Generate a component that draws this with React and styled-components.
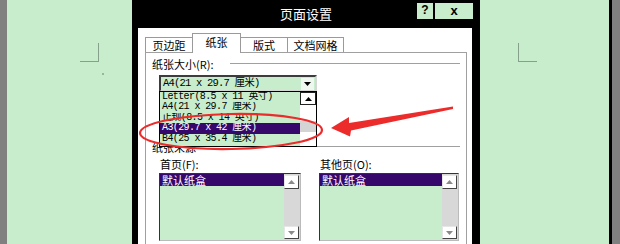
import React from "react";
import styled, { createGlobalStyle } from "styled-components";

const GREEN = "#c7edcc";
const SEL = "#36086c";
const CJK = `"Noto Sans CJK SC", "Liberation Sans", sans-serif`;
const MONO = `"Liberation Mono", "Noto Sans CJK SC", monospace`;

const Global = createGlobalStyle`
  html, body { margin: 0; padding: 0; background: #808080; }
  body { font-family: ${CJK}; }
  * { box-sizing: border-box; }
`;

const Screen = styled.div`
  position: relative;
  display: flex;
  width: 620px;
  height: 244px;
  overflow: hidden;
  background: #808080;
`;

const Gutter = styled.div`
  flex: 0 0 ${(p) => p.$w}px;
  background: ${(p) => p.$bg};
`;

const Page = styled.div`
  flex: 0 0 ${(p) => p.$w}px;
  background: ${GREEN};
  padding: 43px 0 0 ${(p) => p.$padLeft}px;
`;

const CornerMark = styled.div`
  width: 19px;
  height: 19px;
  border-bottom: 1px solid #86a08b;
  ${(p) =>
    p.$side === "left"
      ? "border-right: 1px solid #86a08b;"
      : "border-left: 1px solid #86a08b;"}
`;

const Speck = styled.div`
  width: 2px;
  height: 2px;
  margin: 11px 0 0 22px;
  background: #9cb3a0;
`;

const Dialog = styled.div`
  flex: 0 0 348px;
  display: flex;
  flex-direction: column;
  background: #000;
`;

const TitleBar = styled.div`
  flex: 0 0 28px;
  display: grid;
  grid-template-columns: 1fr auto 1fr;
  align-items: start;
`;

const Title = styled.div`
  grid-column: 2;
  color: #fff;
  font-size: 13px;
  line-height: 27px;
  font-family: ${CJK};
`;

const Caption = styled.div`
  grid-column: 3;
  justify-self: end;
  display: flex;
  gap: 2px;
  padding: 3px 7px 0 0;
`;

const CapBtn = styled.div`
  width: ${(p) => p.$w}px;
  height: 16px;
  background: ${GREEN};
  color: #000;
  font-family: "Liberation Sans", sans-serif;
  font-weight: 700;
  font-size: ${(p) => p.$fs}px;
  line-height: 15px;
  text-align: center;
`;

const Body = styled.div`
  flex: 1;
  display: flex;
  flex-direction: column;
  margin: 0 8px 0 6px;
  padding: 5px 5px 0 7px;
  background: #fff;
`;

const TabStrip = styled.div`
  position: relative;
  z-index: 1;
  display: flex;
  align-items: flex-end;
  height: 19px;
`;

const Tab = styled.div`
  width: ${(p) => p.$w}px;
  height: ${(p) => (p.$active ? 20 : 15)}px;
  margin-right: -1px;
  margin-bottom: ${(p) => (p.$active ? -1 : 0)}px;
  border: 1px solid #9a9a9a;
  border-bottom: none;
  background: #fff;
  font-size: 11px;
  line-height: ${(p) => (p.$active ? 17 : 14)}px;
  text-align: center;
  color: #000;
`;

const Panel = styled.div`
  flex: 1;
  display: flex;
  flex-direction: column;
  border: 1px solid #a0a0a0;
  border-bottom: none;
`;

const SectionRow = styled.div`
  display: flex;
  align-items: center;
  gap: 17px;
  height: 14px;
  margin-top: ${(p) => p.$mt}px;
  padding: 0 6px;
`;

const SectionLabel = styled.div`
  font-size: 11px;
  line-height: 14px;
  color: #000;
  white-space: nowrap;
`;

const Rule = styled.div`
  flex: 1;
  border-top: 1px solid #a0a0a0;
  border-bottom: 1px solid #fff;
`;

const Combo = styled.div`
  position: relative;
  z-index: 2;
  display: flex;
  align-items: center;
  width: 158px;
  height: 17px;
  margin: 4px 0 0 13px;
  border: 2px solid;
  border-color: #3c3c3c #d6d6d6 #d6d6d6 #3c3c3c;
  background: ${GREEN};
`;

const ComboText = styled.div`
  flex: 1;
  padding-left: 2px;
  font-family: ${MONO};
  font-size: 10.5px;
  letter-spacing: -0.8px;
  line-height: 13px;
  white-space: nowrap;
  color: #000;
`;

const DropBtn = styled.div`
  display: flex;
  align-items: center;
  justify-content: center;
  width: 13px;
  height: 12px;
  margin-right: 1px;
  background: #eef8ef;
`;

const DropList = styled.div`
  position: absolute;
  top: calc(100% + 1px);
  left: -2px;
  width: 158px;
  height: 56px;
  display: flex;
  border: 1px solid #000;
  background: ${GREEN};
`;

const Options = styled.div`
  flex: 1;
  overflow: hidden;
`;

const Option = styled.div`
  height: 10.4px;
  padding-left: 2px;
  font-family: ${MONO};
  font-size: 10px;
  letter-spacing: -0.6px;
  line-height: 10.4px;
  white-space: nowrap;
  overflow: hidden;
  color: ${(p) => (p.$sel ? "#fff" : "#000")};
  background: ${(p) => (p.$sel ? SEL : "transparent")};
`;

const DropScroll = styled.div`
  flex: 0 0 16px;
  display: flex;
  flex-direction: column;
  background: #fff;
`;

const ScrollBtn = styled.div`
  display: flex;
  align-items: center;
  justify-content: center;
  flex: 0 0 ${(p) => p.$h}px;
  background: #fff;
  border: 1px solid;
  border-color: ${(p) => (p.$strong ? "#222" : "#e6e6e6 #444 #444 #e6e6e6")};
`;

const Thumb = styled.div`
  height: 11px;
  margin-top: 16px;
  background: #d4d4d4;
`;

const SourceGrid = styled.div`
  display: grid;
  grid-template-columns: 142px 140px;
  column-gap: 18px;
  margin: 3px 0 0 13px;
`;

const SourceCol = styled.div`
  display: flex;
  flex-direction: column;
`;

const FieldLabel = styled.div`
  height: 14px;
  padding-left: 1px;
  font-size: 11px;
  line-height: 14px;
  color: #000;
`;

const ListBox = styled.div`
  display: flex;
  height: 68px;
  margin-top: 2px;
  border: 1px solid;
  border-color: #333 #bbb #bbb #333;
  background: ${GREEN};
`;

const ListItems = styled.div`
  flex: 1;
`;

const ListItem = styled.div`
  height: 12px;
  padding-left: 2px;
  font-size: 11px;
  line-height: 12px;
  color: ${(p) => (p.$sel ? "#fff" : "#000")};
  background: ${(p) => (p.$sel ? SEL : "transparent")};
`;

const ListScroll = styled.div`
  flex: 0 0 16px;
  display: flex;
  flex-direction: column;
  justify-content: space-between;
  padding: 1px 1px 1px 0;
  background: #d8d8d8;
`;

const Overlay = styled.svg`
  position: absolute;
  left: 0;
  top: 0;
  z-index: 5;
  pointer-events: none;
`;

const Tri = ({ dir, color }) => (
  <svg width="7" height="4" viewBox="0 0 7 4">
    <path d={dir === "up" ? "M0 4L3.5 0L7 4Z" : "M0 0L7 0L3.5 4Z"} fill={color} />
  </svg>
);

const tabs = [
  { label: "页边距", w: 48 },
  { label: "纸张", w: 49, active: true },
  { label: "版式", w: 48 },
  { label: "文档网格", w: 57 },
];

const options = [
  { label: "Letter(8.5 x 11 英寸)" },
  { label: "A4(21 x 29.7 厘米)" },
  { label: "正规(8.5 x 14 英寸)" },
  { label: "A3(29.7 x 42 厘米)", sel: true },
  { label: "B4(25 x 35.4 厘米)" },
];

const Source = ({ label }) => (
  <SourceCol>
    <FieldLabel>{label}</FieldLabel>
    <ListBox>
      <ListItems>
        <ListItem $sel>默认纸盒</ListItem>
      </ListItems>
      <ListScroll>
        <ScrollBtn $h={14}>
          <Tri dir="up" color="#8a8a8a" />
        </ScrollBtn>
        <ScrollBtn $h={13}>
          <Tri dir="down" color="#8a8a8a" />
        </ScrollBtn>
      </ListScroll>
    </ListBox>
  </SourceCol>
);

export default function App() {
  return (
    <>
      <Global />
      <Screen>
        <Gutter $w={7} $bg="#808080" />
        <Page $w={125} $padLeft={73}>
          <CornerMark $side="left" />
          <Speck />
        </Page>
        <Dialog>
          <TitleBar>
            <Title>页面设置</Title>
            <Caption>
              <CapBtn $w={16} $fs={12}>?</CapBtn>
              <CapBtn $w={38} $fs={13}>x</CapBtn>
            </Caption>
          </TitleBar>
          <Body>
            <TabStrip>
              {tabs.map((t) => (
                <Tab key={t.label} $w={t.w} $active={t.active}>
                  {t.label}
                </Tab>
              ))}
            </TabStrip>
            <Panel>
              <SectionRow $mt={4}>
                <SectionLabel>纸张大小(R):</SectionLabel>
                <Rule />
              </SectionRow>
              <Combo>
                <ComboText>A4(21 x 29.7 厘米)</ComboText>
                <DropBtn>
                  <Tri dir="down" color="#000" />
                </DropBtn>
                <DropList>
                  <Options>
                    {options.map((o) => (
                      <Option key={o.label} $sel={o.sel}>
                        {o.label}
                      </Option>
                    ))}
                  </Options>
                  <DropScroll>
                    <ScrollBtn $h={13} $strong>
                      <Tri dir="up" color="#000" />
                    </ScrollBtn>
                    <Thumb />
                  </DropScroll>
                </DropList>
              </Combo>
              <SectionRow $mt={48}>
                <SectionLabel>纸张来源</SectionLabel>
                <Rule />
              </SectionRow>
              <SourceGrid>
                <Source label="首页(F):" />
                <Source label="其他页(O):" />
              </SourceGrid>
            </Panel>
          </Body>
        </Dialog>
        <Page $w={129} $padLeft={38}>
          <CornerMark $side="right" />
        </Page>
        <Gutter $w={3} $bg="#000" />
        <Gutter $w={8} $bg="#808080" />
        <Overlay width="620" height="244" viewBox="0 0 620 244">
          <ellipse
            cx="231"
            cy="131.5"
            rx="91"
            ry="17.5"
            transform="rotate(-1 231 131.5)"
            fill="none"
            stroke="#ec2b2b"
            strokeWidth="2.2"
          />
          <path
            d="M331 128 L349 117 L349 123 L453 106.5 L453 109 L351 130.5 L350 136.5 Z"
            fill="#ec2b2b"
          />
        </Overlay>
      </Screen>
    </>
  );
}
